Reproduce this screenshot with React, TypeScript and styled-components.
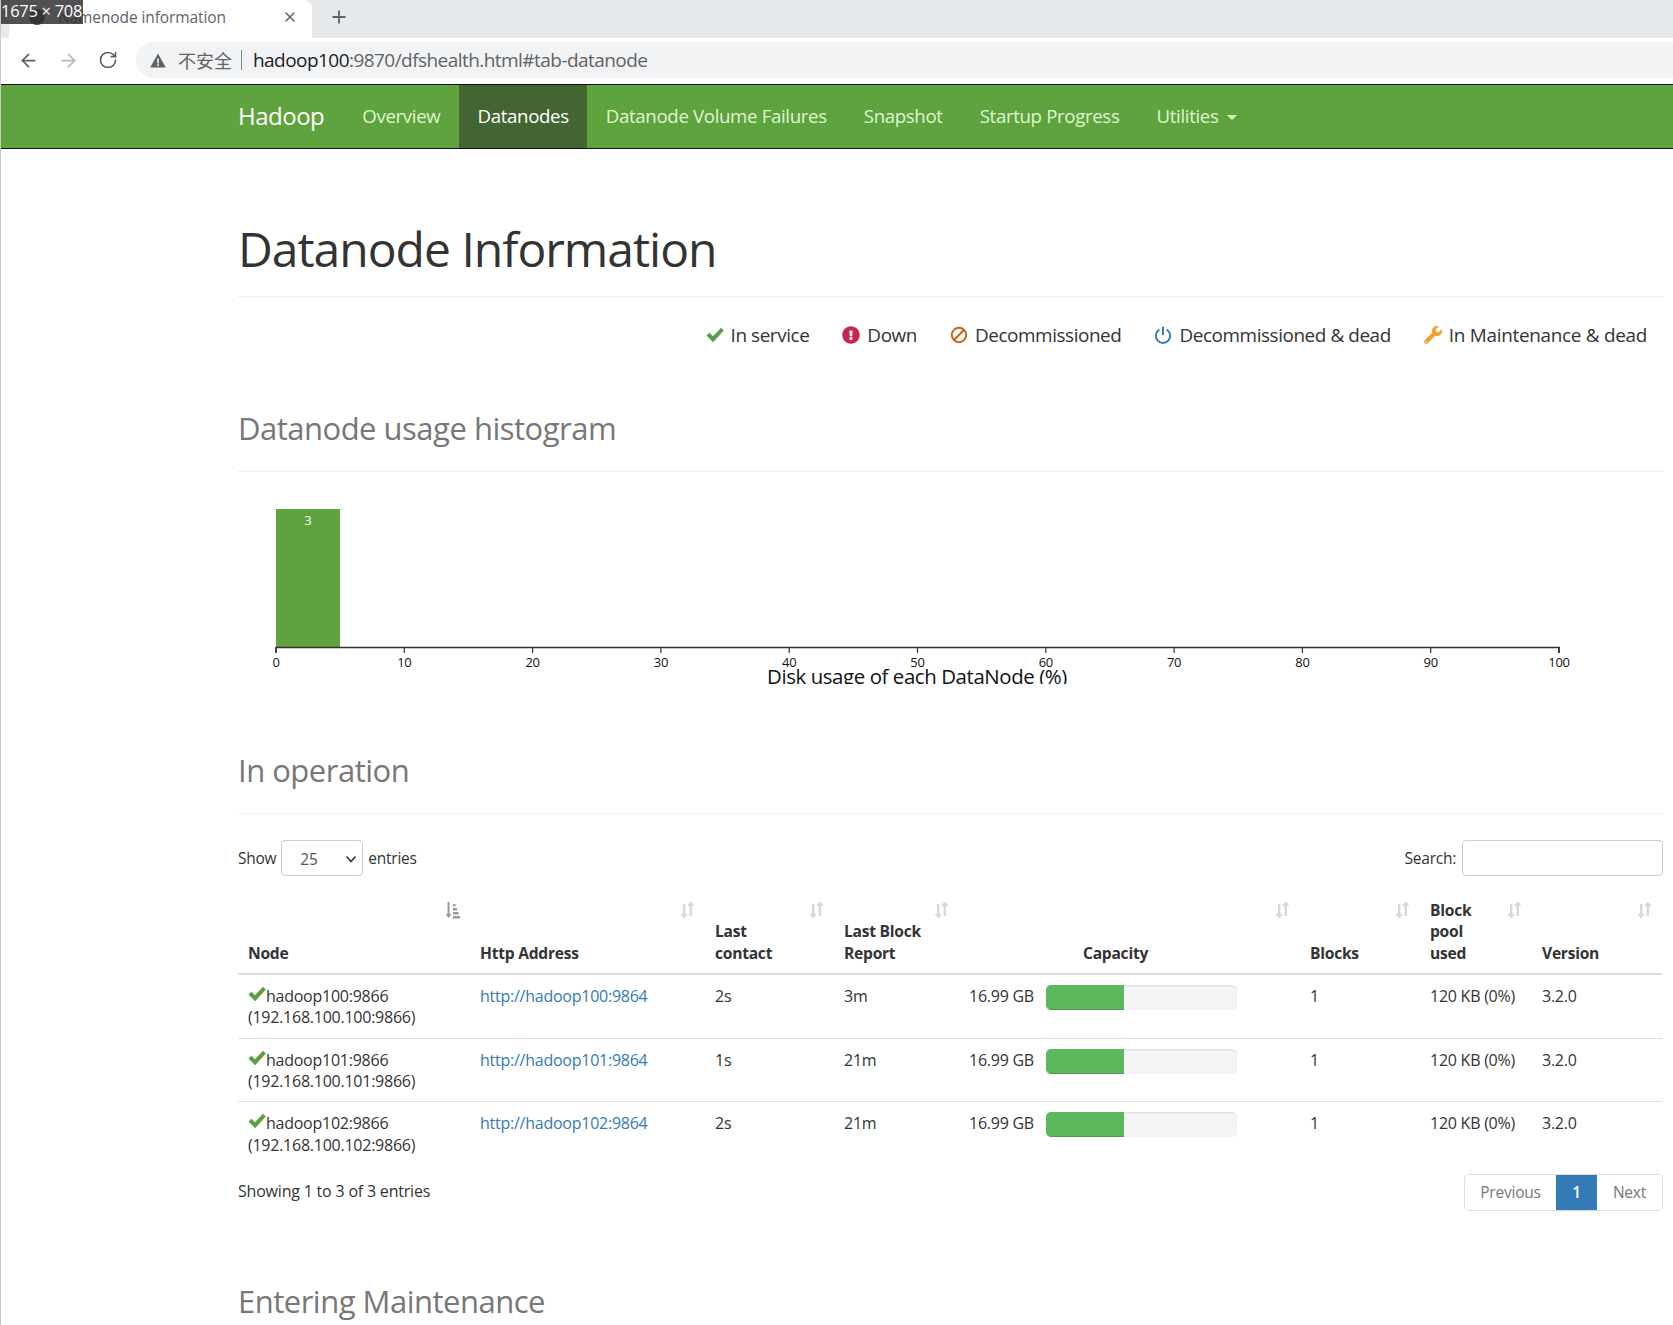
import React from 'react';
import styled, { createGlobalStyle } from 'styled-components';
import { ArrowLeft, ArrowRight, RotateCw, X, Plus } from 'lucide-react';
import { FaExclamationCircle, FaWrench } from 'react-icons/fa';

const Global = createGlobalStyle`
  * { box-sizing: border-box; }
  html, body { margin: 0; padding: 0; background: #fff; }
  body { font-family: "Open Sans", "Noto Sans CJK SC", sans-serif; color: #333; }
`;

const Shell = styled.div`
  position: relative;
  width: 1673px;
  height: 1325px;
  overflow: hidden;
  border-left: 1px solid #c9c9c9;
`;

const TabStrip = styled.div`
  height: 38px;
  background: #e6e9ec;
  display: flex;
  align-items: center;
  padding-left: 8px;
`;

const Tab = styled.div`
  width: 303px;
  height: 38px;
  background: #fff;
  border-radius: 8px 8px 0 0;
  display: flex;
  align-items: center;
  padding: 0 14px 5px 20px;
  font-size: 15.5px;
  letter-spacing: -0.1px;
  color: #5f6368;
`;

const TabTitle = styled.span`
  flex: 1;
`;

const Favicon = styled.span`
  width: 16px;
  height: 16px;
  border-radius: 50%;
  background: #444;
  margin-right: 13px;
`;

const NewTab = styled.span`
  display: flex;
  margin: 0 0 5px 17px;
  color: #5f6368;
`;

const SizeBadge = styled.div`
  position: absolute;
  left: 0;
  top: 0;
  width: 82px;
  height: 24px;
  background: rgba(50, 50, 50, 0.85);
  color: #fff;
  font-size: 16.5px;
  letter-spacing: -0.3px;
  line-height: 21px;
  white-space: nowrap;
  padding-left: 0;
`;

const AddressRow = styled.div`
  height: 46px;
  display: flex;
  align-items: center;
  background: #fff;
  padding: 0 0 2px 17px;
  color: #5f6368;
`;

const NavIcon = styled.span<{ $muted?: boolean }>`
  display: flex;
  width: 22px;
  margin-right: 18px;
  color: ${p => (p.$muted ? '#b4b6b9' : '#5f6368')};
`;

const Omnibox = styled.div`
  margin-left: -2px;
  flex: 1;
  height: 36px;
  background: #f1f3f4;
  border-radius: 18px 0 0 18px;
  display: flex;
  align-items: center;
  padding-left: 14px;
  font-size: 19px;
  letter-spacing: -0.55px;
`;

const Insecure = styled.span`
  margin-left: 12px;
  color: #5f6368;
  font-size: 18px;
  letter-spacing: 0;
`;

const Divider = styled.span`
  width: 1px;
  height: 20px;
  background: #80868b;
  margin: 0 11px 0 9px;
`;

const Host = styled.span`
  color: #202124;
`;

const Rest = styled.span`
  color: #5f6368;
`;

const Navbar = styled.nav`
  height: 65px;
  background: #5fa33e;
  border-top: 1px solid #111;
  border-bottom: 1px solid #111;
  display: flex;
  align-items: stretch;
  padding-left: 237px;
  font-size: 18.67px;
  letter-spacing: -0.35px;
`;

const Brand = styled.a`
  display: flex;
  align-items: center;
  color: #fff;
  font-size: 24px;
  letter-spacing: -0.5px;
  margin-right: 19.5px;
  padding-bottom: 2px;
`;

const NavItem = styled.a<{ $active?: boolean }>`
  display: flex;
  align-items: center;
  padding: 0 18.55px 2px;
  color: ${p => (p.$active ? '#fff' : '#dff5d0')};
  background: ${p => (p.$active ? '#436532' : 'transparent')};
`;

const Caret = styled.span`
  display: inline-block;
  margin-left: 8px;
  margin-top: 3px;
  border-top: 5px solid #dff5d0;
  border-left: 5px solid transparent;
  border-right: 5px solid transparent;
`;

const Page = styled.main`
  padding: 0 10px 0 237px;
`;

const TitleBlock = styled.div`
  margin-top: 73px;
  padding-bottom: 21px;
  border-bottom: 1px solid #eee;
`;

const Title = styled.h1`
  margin: 0;
  font-size: 48px;
  line-height: 53px;
  font-weight: 400;
  color: #333;
  letter-spacing: -1px;
`;

const Legend = styled.div`
  height: 74px;
  margin-bottom: 40px;
  padding: 2px 16px 0 0;
  display: flex;
  align-items: center;
  justify-content: flex-end;
  font-size: 18.9px;
  letter-spacing: -0.42px;
  color: #333;
`;

const LegendItem = styled.span<{ $color: string; $track?: number }>`
  display: flex;
  align-items: center;
  margin-left: 33px;
  ${p => (p.$track !== undefined ? `letter-spacing: ${p.$track}px;` : '')}
  svg {
    color: ${p => p.$color};
    margin-right: 7px;
    width: 18px;
    height: 18px;
  }
`;

const SectionHead = styled.div<{ $top: number }>`
  margin-top: ${p => p.$top}px;
  padding-bottom: 25px;
  border-bottom: 1px solid #eee;
`;

const SectionTitle = styled.h2`
  margin: 0;
  font-size: 31px;
  line-height: 35px;
  font-weight: 400;
  color: #777;
  letter-spacing: -0.5px;
`;

const Chart = styled.svg`
  display: block;
  margin-top: 7px;
  font-family: "Open Sans", sans-serif;
`;

const Controls = styled.div`
  margin-top: 26px;
  height: 36px;
  display: flex;
  align-items: center;
  justify-content: space-between;
  font-size: 15.5px;
  letter-spacing: -0.25px;
`;

const Label = styled.label`
  display: flex;
  align-items: center;
`;

const FakeSelect = styled.span`
  display: flex;
  align-items: center;
  justify-content: space-between;
  width: 82px;
  height: 36px;
  margin: 0 5px;
  padding: 1px 5px 0 18px;
  border: 1px solid #ccc;
  border-radius: 4px;
  color: #555;
  svg { width: 12px; height: 12px; }
`;

const SearchBox = styled.input`
  width: 201px;
  height: 36px;
  margin-left: 6px;
  border: 1px solid #ccc;
  border-radius: 4px;
  background: #fff;
`;

const Table = styled.table`
  width: 1424px;
  margin-top: 13px;
  table-layout: fixed;
  border-collapse: collapse;
  font-size: 16px;
  line-height: 21.33px;
  letter-spacing: -0.25px;
`;

const Th = styled.th<{ $center?: boolean }>`
  position: relative;
  vertical-align: bottom;
  text-align: ${p => (p.$center ? 'center' : 'left')};
  padding: 11px ${p => (p.$center ? 38 : 32)}px 9px 10px;
  font-size: 15.6px;
  font-weight: 700;
  color: #333;
  border-bottom: 2.5px solid #ddd;
`;

const Sort = styled.svg<{ $active?: boolean }>`
  position: absolute;
  top: 12px;
  right: 10px;
  width: 15px;
  height: 18px;
  color: ${p => (p.$active ? '#9a9a9a' : '#d8d8d8')};
`;

const Td = styled.td`
  vertical-align: top;
  padding: 11px 10px 9px;
  border-top: 1px solid #ddd;
  white-space: nowrap;
`;

const CheckMark = styled.svg`
  width: 18px;
  height: 16px;
  color: #5a9f45;
  vertical-align: baseline;
`;

const Link = styled.a`
  color: #337ab7;
`;

const CapacityCell = styled.div`
  display: flex;
  align-items: flex-start;
`;

const CapacityText = styled.span`
  width: 77px;
`;

const Progress = styled.div`
  width: 191px;
  height: 25px;
  margin-top: -1px;
  background: #f5f5f5;
  border-radius: 5px;
  overflow: hidden;
  box-shadow: inset 0 1px 2px rgba(0, 0, 0, 0.1);
`;

const Bar = styled.div`
  height: 100%;
  background: #5cb85c;
  box-shadow: inset 0 -1px 0 rgba(0, 0, 0, 0.15);
`;

const Footer = styled.div`
  margin-top: 9px;
  display: flex;
  justify-content: space-between;
  align-items: flex-start;
  font-size: 16px;
  letter-spacing: -0.2px;
`;

const Info = styled.div`
  margin-top: 6px;
`;

const Pager = styled.div`
  display: flex;
  height: 37px;
  border: 1px solid #ddd;
  border-radius: 5px;
  overflow: hidden;
  font-size: 15.5px;
`;

const PageLink = styled.span<{ $active?: boolean; $w: number }>`
  display: flex;
  align-items: center;
  justify-content: center;
  width: ${p => p.$w}px;
  color: ${p => (p.$active ? '#fff' : '#777')};
  background: ${p => (p.$active ? '#337ab7' : '#fff')};
  font-weight: ${p => (p.$active ? 600 : 400)};
`;

const Check = () => (
  <CheckMark viewBox="0 0 18 16">
    <path fill="currentColor" d="M0.5 8.6 3.4 5.8 7 9.2 15 0.8 17.8 3.4 7.1 15.2z" />
  </CheckMark>
);

const BanIcon = () => (
  <svg viewBox="0 0 18 18">
    <circle cx="9" cy="9" r="7.2" fill="none" stroke="currentColor" strokeWidth="2" />
    <path d="M4 14 14 4" stroke="currentColor" strokeWidth="2" />
  </svg>
);

const PowerIcon = () => (
  <svg viewBox="0 0 18 18">
    <path d="M5.4 3.6a7.2 7.2 0 1 0 7.2 0" fill="none" stroke="currentColor" strokeWidth="1.9" />
    <path d="M9 0.8V9" stroke="currentColor" strokeWidth="2" />
  </svg>
);

const SortIcon = ({ active }: { active?: boolean }) =>
  active ? (
    <Sort $active viewBox="0 0 15 18">
      <path fill="currentColor" d="M2.5 1h2v12h2l-3 4-3-4h2z" />
      <path fill="currentColor" d="M8 3h2.5v2.5H8zM8 7h4v2.5H8zM8 11h5.5v2.5H8zM8 15h7v2.5H8z" />
    </Sort>
  ) : (
    <Sort viewBox="0 0 15 18">
      <path fill="currentColor" d="M3 3h2.4v10H8l-3.8 4.6L.4 13H3z" />
      <path fill="currentColor" d="M9.6 15h2.4V5h2.6L10.8.4 7 5h2.6z" />
    </Sort>
  );

const headers: { label: React.ReactNode; center?: boolean; active?: boolean }[] = [
  { label: 'Node', active: true },
  { label: 'Http Address' },
  { label: <>Last<br />contact</> },
  { label: <>Last Block<br />Report</> },
  { label: 'Capacity', center: true },
  { label: 'Blocks' },
  { label: <>Block<br />pool<br />used</> },
  { label: 'Version' },
];

const widths = [232, 235, 129, 125, 341, 120, 112, 130];

const rows = [
  { id: '100', contact: '2s', report: '3m' },
  { id: '101', contact: '1s', report: '21m' },
  { id: '102', contact: '2s', report: '21m' },
];

const ticks = [0, 10, 20, 30, 40, 50, 60, 70, 80, 90, 100];

export default function App() {
  return (
    <Shell>
      <Global />
      <TabStrip>
        <Tab>
          <Favicon />
          <TabTitle>Namenode information</TabTitle>
          <X size={16} strokeWidth={2.2} />
        </Tab>
        <NewTab><Plus size={20} strokeWidth={2.2} /></NewTab>
      </TabStrip>
      <SizeBadge>1675 × 708</SizeBadge>
      <AddressRow>
        <NavIcon><ArrowLeft size={21} strokeWidth={2} /></NavIcon>
        <NavIcon $muted><ArrowRight size={21} strokeWidth={2} /></NavIcon>
        <NavIcon><RotateCw size={20} strokeWidth={2} /></NavIcon>
        <Omnibox>
          <svg width="16" height="15" viewBox="0 0 16 15">
            <path fill="#5f6368" d="M8 0.5 15.8 14.5H0.2z" />
            <path fill="#f1f3f4" d="M7.2 5.5h1.6v5H7.2zM7.2 11.3h1.6v1.6H7.2z" />
          </svg>
          <Insecure>不安全</Insecure>
          <Divider />
          <span><Host>hadoop100</Host><Rest>:9870/dfshealth.html#tab-datanode</Rest></span>
        </Omnibox>
      </AddressRow>
      <Navbar>
        <Brand>Hadoop</Brand>
        <NavItem>Overview</NavItem>
        <NavItem $active>Datanodes</NavItem>
        <NavItem>Datanode Volume Failures</NavItem>
        <NavItem>Snapshot</NavItem>
        <NavItem>Startup Progress</NavItem>
        <NavItem>Utilities<Caret /></NavItem>
      </Navbar>
      <Page>
        <TitleBlock><Title>Datanode Information</Title></TitleBlock>
        <Legend>
          <LegendItem $color="#5a9f45"><Check />In service</LegendItem>
          <LegendItem $color="#c7254e"><FaExclamationCircle />Down</LegendItem>
          <LegendItem $color="#c7660f"><BanIcon />Decommissioned</LegendItem>
          <LegendItem $color="#337ab7"><PowerIcon />Decommissioned &amp; dead</LegendItem>
          <LegendItem $color="#eea236" $track={-0.28}><FaWrench />In Maintenance &amp; dead</LegendItem>
        </Legend>
        <SectionHead $top={0}><SectionTitle>Datanode usage histogram</SectionTitle></SectionHead>
        <Chart width="1424" height="205" viewBox="0 0 1424 205">
          <rect x="38" y="30" width="64" height="138" fill="#5fa33e" />
          <text x="70" y="46" fill="#fff" fontSize="13" textAnchor="middle">3</text>
          <path d="M38 174V168.5H1321V174" fill="none" stroke="#333" strokeWidth="1.6" />
          {ticks.map((t, i) => {
            const x = 38 + i * 128.3;
            return (
              <g key={t}>
                <line x1={x} x2={x} y1="168" y2="174" stroke="#333" strokeWidth="1.2" />
                <text x={x} y="188" fontSize="13" fill="#111" textAnchor="middle" letterSpacing="-0.3">{t}</text>
              </g>
            );
          })}
          <text x="529" y="205" fontSize="20.4" fill="#111" letterSpacing="-0.4">Disk usage of each DataNode (%)</text>
        </Chart>
        <SectionHead $top={69}><SectionTitle>In operation</SectionTitle></SectionHead>
        <Controls>
          <Label>Show<FakeSelect>25<svg viewBox="0 0 12 12"><path d="M1.5 3.5 6 8.5l4.5-5" fill="none" stroke="#333" strokeWidth="1.6" /></svg></FakeSelect>entries</Label>
          <Label>Search:<SearchBox /></Label>
        </Controls>
        <Table>
          <colgroup>
            {widths.map((w, i) => <col key={i} width={w} />)}
          </colgroup>
          <thead>
            <tr>
              {headers.map((h, i) => (
                <Th key={i} $center={h.center}>{h.label}<SortIcon active={h.active} /></Th>
              ))}
            </tr>
          </thead>
          <tbody>
            {rows.map(r => (
              <tr key={r.id}>
                <Td><Check />hadoop{r.id}:9866<br />(192.168.100.{r.id}:9866)</Td>
                <Td><Link>http://hadoop{r.id}:9864</Link></Td>
                <Td>{r.contact}</Td>
                <Td>{r.report}</Td>
                <Td>
                  <CapacityCell>
                    <CapacityText>16.99 GB</CapacityText>
                    <Progress><Bar style={{ width: '41%' }} /></Progress>
                  </CapacityCell>
                </Td>
                <Td>1</Td>
                <Td>120 KB (0%)</Td>
                <Td>3.2.0</Td>
              </tr>
            ))}
          </tbody>
        </Table>
        <Footer>
          <Info>Showing 1 to 3 of 3 entries</Info>
          <Pager>
            <PageLink $w={91}>Previous</PageLink>
            <PageLink $active $w={41}>1</PageLink>
            <PageLink $w={65}>Next</PageLink>
          </Pager>
        </Footer>
        <SectionHead $top={73}><SectionTitle>Entering Maintenance</SectionTitle></SectionHead>
      </Page>
    </Shell>
  );
}
